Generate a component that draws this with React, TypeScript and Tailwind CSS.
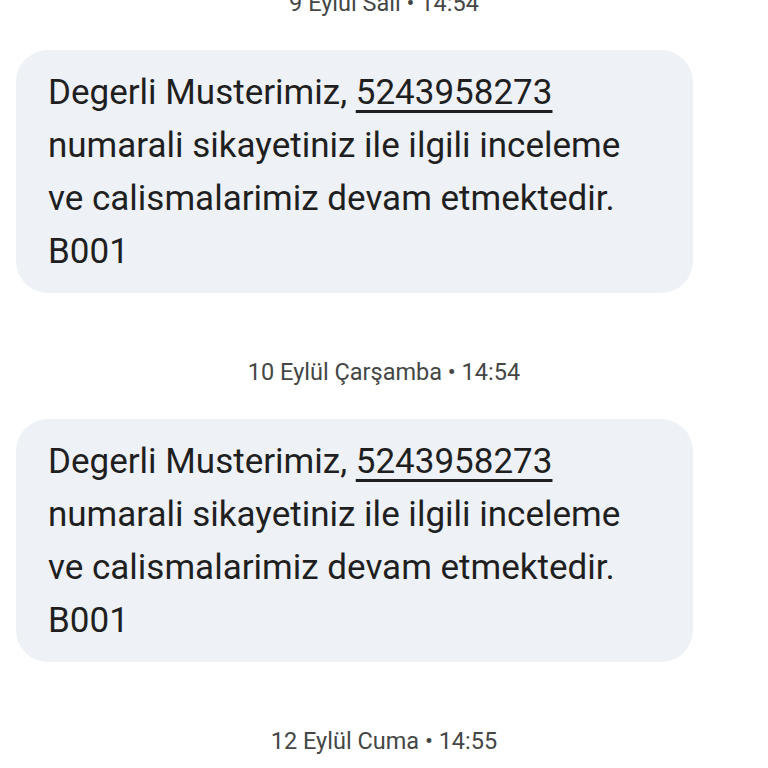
const messages = [
  { date: "9 Eylül Salı • 14:54" },
  { date: "10 Eylül Çarşamba • 14:54" },
]

const Bubble = () => (
  <div className="ml-4 w-[677px] rounded-[32px] bg-[#eef1f6] px-8 pt-4 pb-[15px] text-[35px] leading-[53px] text-[#1f1f1f]">
    <p>
      Degerli Musterimiz,{" "}
      <span className="underline decoration-[3px] underline-offset-[6px]">5243958273</span>
      <br />
      numarali sikayetiniz ile ilgili inceleme
      <br />
      ve calismalarimiz devam etmektedir.
      <br />
      B001
    </p>
  </div>
)

const DateLabel = ({ text }: { text: string }) => (
  <div className="text-center text-[23.5px] leading-[28px] text-[#444746]">{text}</div>
)

export default function App() {
  return (
    <div className="h-[768px] w-[768px] overflow-hidden bg-white" style={{ fontFamily: "Roboto, 'Noto Sans', sans-serif" }}>
      <div className="-mt-[11px] flex flex-col">
        {messages.map((m) => (
          <div key={m.date} className="flex flex-col">
            <DateLabel text={m.date} />
            <div className="h-[33px]" />
            <Bubble />
            <div className="h-[65px]" />
          </div>
        ))}
        <DateLabel text="12 Eylül Cuma • 14:55" />
      </div>
    </div>
  )
}
